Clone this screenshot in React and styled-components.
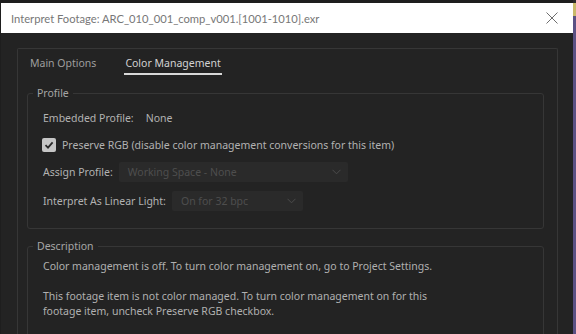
import React, { useState } from 'react';
import styled, { createGlobalStyle } from 'styled-components';

const GlobalStyle = createGlobalStyle`
  html, body {
    margin: 0;
    padding: 0;
    background: #1e1e1e;
  }
  body {
    font-family: "Noto Sans", "Open Sans", sans-serif;
  }
`;

function CheckBox({ checked, onToggle }) {
  return (
    <CheckBoxBox onClick={onToggle} $checked={checked}>
      {checked && (
        <svg width="10" height="10" viewBox="0 0 10 10">
          <path d="M1.5 5.2 L4 7.6 L8.6 2.4" fill="none" stroke="#2a2a2a" strokeWidth="1.8" />
        </svg>
      )}
    </CheckBoxBox>
  );
}

function Select({ value, width }) {
  return (
    <SelectBox $width={width}>
      <span>{value}</span>
      <svg width="9" height="6" viewBox="0 0 9 6">
        <path d="M0.5 0.8 L4.5 4.8 L8.5 0.8" fill="none" stroke="#4c4c4c" strokeWidth="1" />
      </svg>
    </SelectBox>
  );
}

function App() {
  const [tab, setTab] = useState('color');
  const [preserve, setPreserve] = useState(true);

  return (
    <>
      <GlobalStyle />
      <Screen>
        <Window>
          <TitleBar>
            <Title>Interpret Footage: ARC_010_001_comp_v001.[1001-1010].exr</Title>
            <CloseButton>
              <svg width="12" height="12" viewBox="0 0 12 12">
                <path d="M0.5 0.5 L11.5 11.5 M11.5 0.5 L0.5 11.5" stroke="#6e6e6e" strokeWidth="1" />
              </svg>
            </CloseButton>
          </TitleBar>

          <Body>
            <Panel>
              <Tabs>
                <Tab $active={tab === 'main'} onClick={() => setTab('main')}>
                  Main Options
                </Tab>
                <Tab $active={tab === 'color'} onClick={() => setTab('color')}>
                  Color Management
                </Tab>
              </Tabs>

              <Group>
                <Legend>Profile</Legend>
                <Row>
                  <Label>Embedded Profile:</Label>
                  <Value>None</Value>
                </Row>
                <Row>
                  <CheckBox checked={preserve} onToggle={() => setPreserve(!preserve)} />
                  <Label>Preserve RGB (disable color management conversions for this item)</Label>
                </Row>
                <Row>
                  <Label>Assign Profile:</Label>
                  <Select value="Working Space - None" width="229px" />
                </Row>
                <Row $tall>
                  <Label>Interpret As Linear Light:</Label>
                  <Select value="On for 32 bpc" width="131px" />
                </Row>
              </Group>

              <Group $description>
                <Legend>Description</Legend>
                <Paragraph>
                  Color management is off. To turn color management on, go to Project Settings.
                </Paragraph>
                <Paragraph>
                  This footage item is not color managed. To turn color management on for this
                  <br />
                  footage item, uncheck Preserve RGB checkbox.
                </Paragraph>
              </Group>
            </Panel>
          </Body>
        </Window>
        <Desktop />
      </Screen>
    </>
  );
}

const Screen = styled.div`
  display: flex;
  height: 334px;
  padding-top: 3px;
  box-sizing: border-box;
  overflow: hidden;
`;

const Window = styled.div`
  display: flex;
  flex-direction: column;
  width: 572px;
  margin-left: 1px;
  background: #232323;
`;

const TitleBar = styled.div`
  display: flex;
  align-items: center;
  justify-content: space-between;
  height: 30px;
  padding: 0 15px 0 10px;
  background: #ffffff;
  flex-shrink: 0;
`;

const Title = styled.div`
  font-family: Lato, "Noto Sans", sans-serif;
  font-size: 11.2px;
  color: #777777;
  white-space: nowrap;
`;

const CloseButton = styled.div`
  display: flex;
  align-items: center;
  justify-content: center;
  width: 12px;
  height: 12px;
  cursor: pointer;
`;

const Body = styled.div`
  flex: 1;
  padding: 15px 15px 0 16px;
  overflow: hidden;
`;

const Panel = styled.div`
  height: 100%;
  border: 1px solid #363636;
  border-bottom: none;
  border-radius: 2px 2px 0 0;
  padding: 0 13px 0 9px;
`;

const Tabs = styled.div`
  display: flex;
  gap: 27px;
  height: 26px;
  padding: 5px 0 0 2px;
  margin-bottom: 6px;
`;

const Tab = styled.div`
  font-size: 10.5px;
  line-height: 18px;
  height: 19px;
  color: ${(p) => (p.$active ? '#d2d2d2' : '#9e9e9e')};
  border-bottom: 2px solid ${(p) => (p.$active ? '#d8d8d8' : 'transparent')};
  padding: 0 1px;
  cursor: pointer;
`;

const Group = styled.fieldset`
  margin: 0 0 ${(p) => (p.$description ? '0' : '10px')};
  padding: ${(p) => (p.$description ? '6px 15px 20px' : '4px 15px 12px')};
  border: 1px solid #363636;
  border-radius: 3px;
  min-width: 0;
`;

const Legend = styled.legend`
  padding: 0 4px;
  margin-left: -10px;
  font-size: 10.5px;
  color: #a6a6a6;
`;

const Row = styled.div`
  display: flex;
  align-items: center;
  gap: 6px;
  height: ${(p) => (p.$tall ? '31px' : '27px')};
`;

const Label = styled.span`
  font-size: 10.5px;
  color: #b2b2b2;
  white-space: nowrap;
`;

const Value = styled(Label)`
  margin-left: 6px;
`;

const CheckBoxBox = styled.div`
  display: flex;
  align-items: center;
  justify-content: center;
  width: 14px;
  height: 14px;
  margin-left: -1px;
  border-radius: 2px;
  background: ${(p) => (p.$checked ? '#c6c6c6' : 'transparent')};
  border: ${(p) => (p.$checked ? 'none' : '1px solid #777')};
  cursor: pointer;
`;

const SelectBox = styled.div`
  display: flex;
  align-items: center;
  justify-content: space-between;
  box-sizing: border-box;
  width: ${(p) => p.$width};
  height: 20px;
  padding: 0 7px 0 9px;
  border-radius: 2px;
  background: #2a2a2a;
  font-size: 10.5px;
  color: #4e4e4e;
`;

const Paragraph = styled.p`
  margin: 0 0 15px;
  font-size: 10.5px;
  line-height: 15px;
  color: #b0b0b0;
`;

const Desktop = styled.div`
  flex: 1;
  margin-top: -3px;
  background: linear-gradient(#2a2a2a 0 3px, #c9b96a 3px 16px, #5b5184 16px);
`;

export default App;
